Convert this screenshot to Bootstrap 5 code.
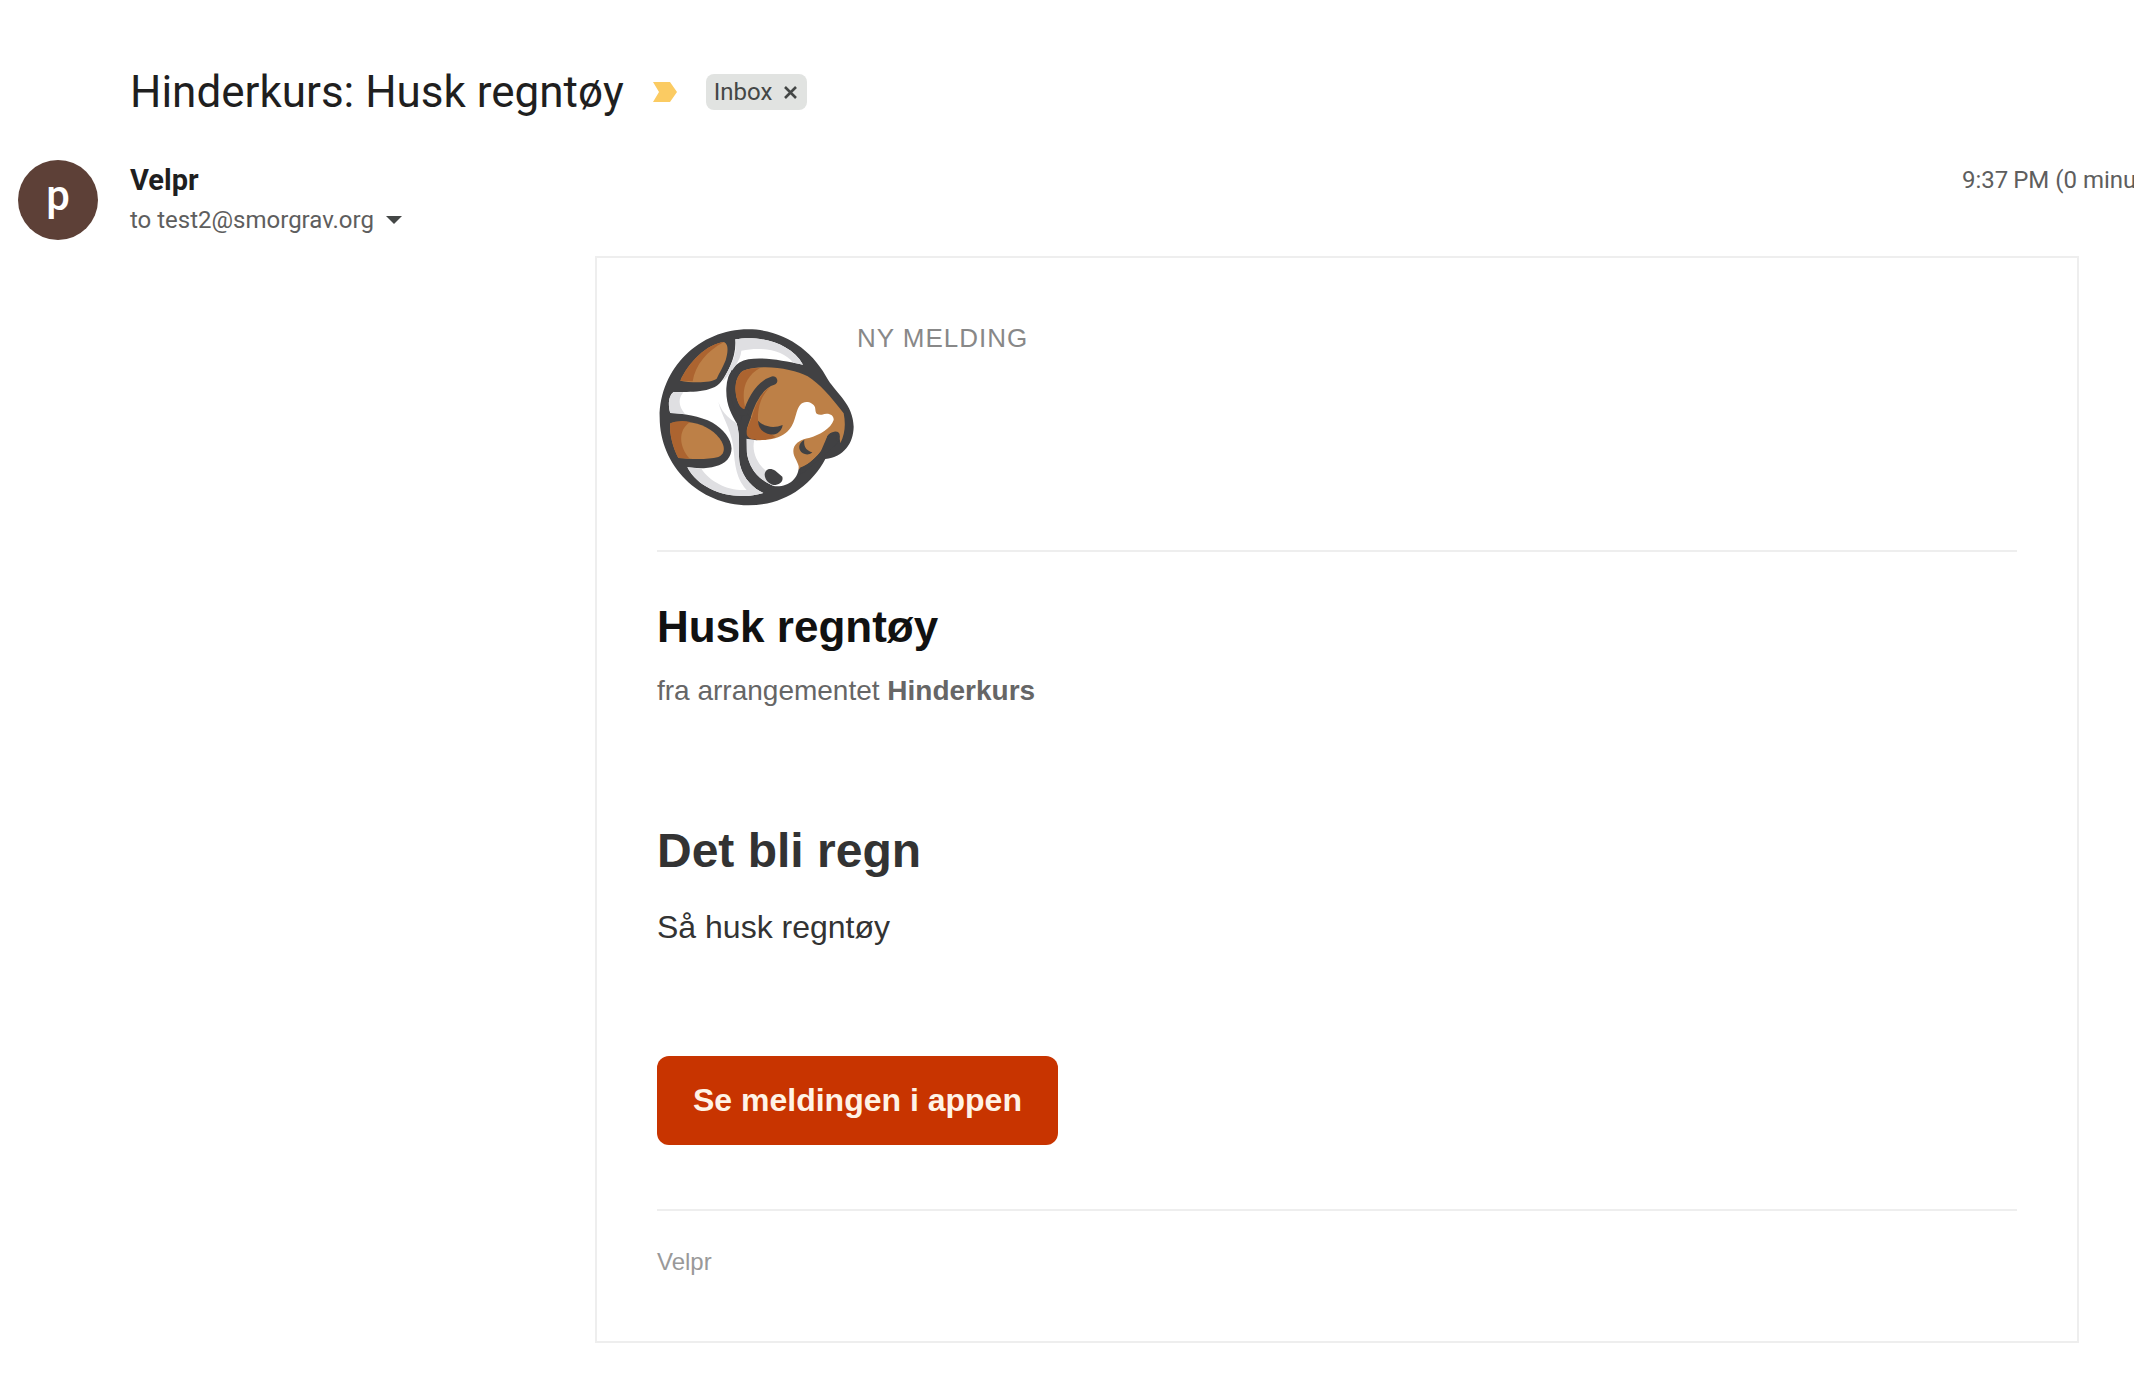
<!DOCTYPE html>
<html lang="no">
<head>
<meta charset="utf-8">
<meta name="viewport" content="width=device-width, initial-scale=1">
<title>Hinderkurs: Husk regntøy</title>
<link href="https://cdn.jsdelivr.net/npm/bootstrap@5.3.0/dist/css/bootstrap.min.css" rel="stylesheet">
<style>
body { background: #fff; color: #1f1f1f; font-family: Roboto, sans-serif; overflow-x: hidden; }
.subject-bar { padding: 64px 0 0 130px; gap: 29px; }
.subject { font: 400 44px/56px Roboto, sans-serif; }
.chip { background: #e1e3e1; color: #444746; border-radius: 8px; height: 36px; padding: 0 10px 0 8px; gap: 12px; font: 400 24px/36px Roboto, sans-serif; }
.sender-bar { padding: 40px 0 0 18px; gap: 32px; }
.avatar { width: 80px; height: 80px; background: #5d4037; color: #fff; font: 500 42px/72px Roboto, sans-serif; }
.sender { font: 700 29px/40px Roboto, sans-serif; }
.meta { color: #5e5e5e; font: 400 24px/40px Roboto, sans-serif; }
.stamp { width: 172px; }
.mail { margin: 16px 55px 52px 595px; border: 2px solid #eee; padding: 60px; font-family: "Liberation Sans", Arial, sans-serif; }
.mail-head { border-bottom: 2px solid #eee; padding-bottom: 32px; }
.kicker { color: #888; font-size: 26px; line-height: 40px; letter-spacing: 1px; }
.mail h1 { color: #111; font-size: 44px; line-height: 54px; font-weight: 700; padding-top: 48px; }
.origin { color: #666; font-size: 28px; line-height: 40px; padding-top: 17px; }
.mail h2 { color: #333; font-size: 48px; line-height: 56px; font-weight: 700; padding-top: 112px; }
.copy { color: #333; font-size: 32px; line-height: 48px; padding-top: 24px; }
.open-app, .open-app:hover { background: #c83400; color: #fff3e6; border-radius: 12px; font-size: 32px; line-height: 37px; font-weight: 700; padding: 26px 36px; margin: 105px 0 64px; }
.mail-foot { border-top: 2px solid #eee; color: #999; font-size: 24px; line-height: 38px; padding-top: 32px; }
</style>
</head>
<body>
<header class="subject-bar d-flex align-items-center">
  <h2 class="subject m-0">Hinderkurs: Husk regntøy</h2>
  <button class="btn p-0 border-0 d-flex" type="button" aria-label="Important"><svg width="24" height="20" viewBox="0 0 24 20"><path d="M0 0H17L24 10L17 20H0L6 10Z" fill="#fbcb62"/></svg></button>
  <div class="chip d-flex align-items-center">Inbox
    <button class="btn p-0 border-0 d-flex" type="button" aria-label="Remove label"><svg width="13" height="13" viewBox="0 0 13 13"><path d="M1 1L12 12M12 1L1 12" stroke="#444746" stroke-width="2.6"/></svg></button>
  </div>
</header>
<section class="sender-bar d-flex">
  <div class="avatar rounded-circle text-center flex-shrink-0">p</div>
  <div class="flex-grow-1">
    <div class="sender">Velpr</div>
    <div class="meta d-flex align-items-center gap-2">to test2@smorgrav.org
      <button class="btn p-0 border-0 d-flex" type="button" aria-label="Show details"><svg width="24" height="24" viewBox="0 0 24 24"><path d="M4 8H20L12 16Z" fill="#444746"/></svg></button>
    </div>
  </div>
  <div class="meta stamp text-nowrap flex-shrink-0">9:37&thinsp;PM (0 minu</div>
</section>
<main class="mail">
  <div class="mail-head d-flex align-items-start">
    <svg width="200" height="200" viewBox="51 24 600 600" role="img" aria-label="Sleeping dog">
      <path d="M325 58C432 58 520 122 565 211C590 250 640 285 641 350C640 400 612 440 556 447C512 530 430 586 325 586C178 586 59 468 59 322C59 176 178 58 325 58Z" fill="#414143"/>
      <path d="M286 88C350 76 450 94 489 164C430 152 370 140 325 148C285 156 262 185 259 235C257 285 276 315 290 340C304 390 292 430 300 465C311 508 340 535 370 549C290 574 182 548 142 472C190 478 238 474 262 449C294 410 260 363 218 338C180 318 128 310 91 309C83 285 86 256 101 246C150 245 217 249 243 215C262 192 290 140 286 88Z" fill="#fff"/>
      <path d="M286 88C350 76 450 94 489 164L460 158C430 122 370 108 304 122C302 150 280 180 247 216C268 170 294 140 286 88ZM91 309C83 285 86 256 101 246L130 247C114 266 115 290 135 312ZM142 472L184 476C210 515 265 544 320 540C283 500 285 450 279 405C270 350 244 317 235 275C248 315 276 330 290 340C304 390 292 430 300 465C311 508 340 535 370 549C290 574 182 548 142 472Z" fill="#dfdfe2"/>
      <path d="M121 212C145 158 201 101 252 96C268 103 263 131 257 151C249 171 239 188 230 206C215 219 155 219 121 212Z" fill="#bd8047"/>
      <path d="M121 212C145 158 201 101 252 96C200 123 166 165 158 214Z" fill="#ac6430"/>
      <path d="M91 340C145 327 198 343 230 375C255 401 260 430 235 441C200 450 150 447 115 444C99 414 87 370 91 340Z" fill="#bd8047"/>
      <path d="M91 340C110 332 132 332 151 336C111 360 119 414 149 446L115 444C99 414 87 370 91 340Z" fill="#ac6430"/>
      <path d="M306 300C281 264 278 207 308 183C365 160 460 176 503 199C538 221 571 258 611 310C617 340 616 371 601 400C600 367 577 357 562 379L556 407C539 430 513 462 481 474C430 520 390 410 318 364L333 320Z" fill="#bd8047"/>
      <path d="M306 300C281 264 278 207 308 183C325 176 342 174 360 174C315 199 303 242 316 294ZM391 231C361 251 345 286 336 320L318 364C318 376 324 384 336 388C363 393 387 389 407 382L355 343C350 302 361 257 391 231Z" fill="#ac6430"/>
      <path d="M317 386C362 395 408 391 438 368C469 344 464 304 481 284C493 270 519 276 525 292C528 306 524 316 546 314C567 307 582 316 581 330C573 355 539 375 507 384C485 387 466 398 461 415C456 438 472 449 476 469C477 505 445 533 401 528C353 507 317 472 317 386Z" fill="#fff"/>
      <path d="M317 386L343 391C333 428 356 475 401 499L401 528C353 507 317 472 317 386Z" fill="#dfdfe2"/>
      <path d="M399 212C360 224 334 270 318 323" fill="none" stroke="#414143" stroke-width="26" stroke-linecap="round"/>
      <path d="M318 323C304 343 309 380 309 430C312 480 340 515 380 532" fill="none" stroke="#414143" stroke-width="22" stroke-linecap="round"/>
      <path d="M274 180C263 225 270 284 297 315L321 318L328 294C303 315 273 258 290 201Z" fill="#414143"/>
      <path d="M354 332C374 352 402 356 428 345C425 366 407 377 389 373C367 368 354 353 354 332ZM493 389C490 409 498 422 517 427C505 439 486 433 480 421C474 408 480 396 493 389ZM374 493C377 474 393 474 406 482L427 500C431 515 418 525 401 525C386 522 374 509 374 493ZM562 379C575 358 598 366 598 390L590 402C570 421 557 430 542 446C520 459 497 487 481 493L480 473C510 462 529 442 543 423Z" fill="#414143"/>
      <path d="M583 370C594 367 598 376 592 389" fill="none" stroke="#414143" stroke-width="10" stroke-linecap="round"/>
    </svg>
    <div class="kicker">NY MELDING</div>
  </div>
  <h1 class="m-0">Husk regntøy</h1>
  <div class="origin">fra arrangementet <strong>Hinderkurs</strong></div>
  <h2 class="m-0">Det bli regn</h2>
  <p class="copy m-0">Så husk regntøy</p>
  <a class="open-app btn border-0 d-table" href="#">Se meldingen i appen</a>
  <footer class="mail-foot">Velpr</footer>
</main>
<script src="https://cdn.jsdelivr.net/npm/bootstrap@5.3.0/dist/js/bootstrap.bundle.min.js"></script>
</body>
</html>
